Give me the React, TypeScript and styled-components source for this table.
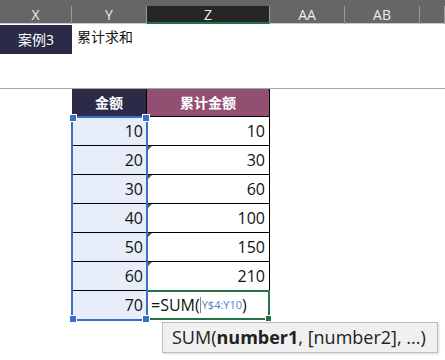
import React from 'react'
import styled, { createGlobalStyle } from 'styled-components'

const GlobalStyle = createGlobalStyle`
  body {
    margin: 0;
    background: #fff;
    font-family: 'Open Sans', 'Noto Sans', 'Noto Sans CJK SC', sans-serif;
  }
`

const columns = ['X', 'Y', 'Z', 'AA', 'AB', '']
const amounts = [10, 20, 30, 40, 50, 60, 70]
const totals = [10, 30, 60, 100, 150, 210]

const App = () => {
  return (
    <Page>
      <GlobalStyle />
      <HeaderBar>
        {columns.map((col, index) => (
          <HeaderCell key={index} active={col === 'Z'}>
            {col}
          </HeaderCell>
        ))}
      </HeaderBar>

      <TitleRow>
        <CaseLabel>案例3</CaseLabel>
        <TitleText>累计求和</TitleText>
      </TitleRow>

      <Spacer />

      <Table>
        <HeadCell color="#2b2b48">金额</HeadCell>
        <HeadCell color="#934f71">累计金额</HeadCell>
        {amounts.map((amount, index) => (
          <React.Fragment key={index}>
            <AmountCell>{amount}</AmountCell>
            {index < totals.length ? (
              <TotalCell>
                {index > 0 && <ErrorMark />}
                {totals[index]}
              </TotalCell>
            ) : (
              <FormulaCell>
                =SUM(<Caret />
                <RangeRef>Y$4:Y10</RangeRef>)
                <FillHandle color="#217346" />
              </FormulaCell>
            )}
          </React.Fragment>
        ))}

        <Selection>
          <Handle style={{ left: -4, top: -4 }} />
          <Handle style={{ right: -4, top: -4 }} />
          <Handle style={{ left: -4, bottom: -4 }} />
          <Handle style={{ right: -4, bottom: -4 }} />
        </Selection>

        <Tooltip>
          SUM(<b>number1</b>, [number2], ...)
        </Tooltip>
      </Table>
    </Page>
  )
}

const Page = styled.div`
  width: 445px;
  height: 360px;
  overflow: hidden;
`
const HeaderBar = styled.div`
  display: grid;
  grid-template-columns: 72px 75px 123px 75px 75px 1fr;
  height: 24px;
  background: #666666;
  border-bottom: 1px solid #c8c8c8;
  box-sizing: border-box;
`
const HeaderCell = styled.div<{ active?: boolean }>`
  margin-top: 6px;
  height: 18px;
  box-sizing: border-box;
  border-right: 1px solid #9a9a9a;
  background: ${(p) => (p.active ? '#262626' : 'transparent')};
  border-bottom: ${(p) => (p.active ? '2px solid #217346' : 'none')};
  color: #ededed;
  font-size: 14px;
  line-height: 18px;
  text-align: center;
`
const TitleRow = styled.div`
  display: flex;
  height: 29px;
  margin-top: 1px;
`
const CaseLabel = styled.div`
  width: 72px;
  background: #2b2a48;
  color: #fff;
  font-size: 14px;
  line-height: 29px;
  text-align: center;
`
const TitleText = styled.div`
  padding-left: 5px;
  font-size: 14px;
  line-height: 24px;
  color: #111;
`
const Spacer = styled.div`
  height: 34px;
  border-bottom: 1px solid #a6a6a6;
`
const Table = styled.div`
  position: relative;
  display: grid;
  grid-template-columns: 75px 123px;
  grid-template-rows: 28px;
  grid-auto-rows: 29px;
  margin-left: 72px;
  width: 198px;
`
const HeadCell = styled.div<{ color: string }>`
  background: ${(p) => p.color};
  color: #fff;
  font-weight: bold;
  font-size: 14px;
  line-height: 28px;
  text-align: center;
  border-bottom: 1px solid #000;
  border-right: 1px solid #000;
`
const AmountCell = styled.div`
  background: #e8eef9;
  border-bottom: 1px solid #000;
  border-right: 1px solid #000;
  font-size: 16px;
  line-height: 28px;
  text-align: right;
  padding-right: 3px;
  color: #111;
`
const TotalCell = styled.div`
  position: relative;
  border-bottom: 1px solid #000;
  border-right: 1px solid #000;
  font-size: 16px;
  line-height: 28px;
  text-align: right;
  padding-right: 4px;
  color: #111;
`
const ErrorMark = styled.span`
  position: absolute;
  left: 0;
  top: 0;
  width: 0;
  height: 0;
  border-top: 5px solid #1e7a32;
  border-right: 5px solid transparent;
`
const FormulaCell = styled.div`
  position: relative;
  border: 2px solid #217346;
  margin-left: -1px;
  margin-top: -1px;
  font-size: 16px;
  line-height: 26px;
  padding-left: 3px;
  color: #111;
  display: flex;
  align-items: center;
`
const Caret = styled.span`
  display: inline-block;
  width: 1px;
  height: 16px;
  background: #888;
`
const RangeRef = styled.span`
  font-size: 11px;
  color: #4a7fd2;
  margin-left: 1px;
`
const FillHandle = styled.span<{ color: string }>`
  position: absolute;
  right: -4px;
  bottom: -4px;
  width: 5px;
  height: 5px;
  background: ${(p) => p.color};
  border: 1px solid #fff;
`
const Selection = styled.div`
  position: absolute;
  left: -1px;
  top: 27px;
  width: 77px;
  height: 205px;
  box-sizing: border-box;
  border: 2px solid #3a6fc6;
  pointer-events: none;
`
const Handle = styled.span`
  position: absolute;
  width: 6px;
  height: 6px;
  background: #3a6fc6;
  border: 1px solid #fff;
`
const Tooltip = styled.div`
  position: absolute;
  left: 90px;
  top: 233px;
  width: 276px;
  height: 31px;
  box-sizing: border-box;
  background: #f0f0f0;
  border: 1px solid #bdbdbd;
  box-shadow: 1px 1px 2px rgba(0, 0, 0, 0.15);
  font-size: 18px;
  line-height: 29px;
  padding-left: 9px;
  color: #222;
  white-space: nowrap;
`

export default App
